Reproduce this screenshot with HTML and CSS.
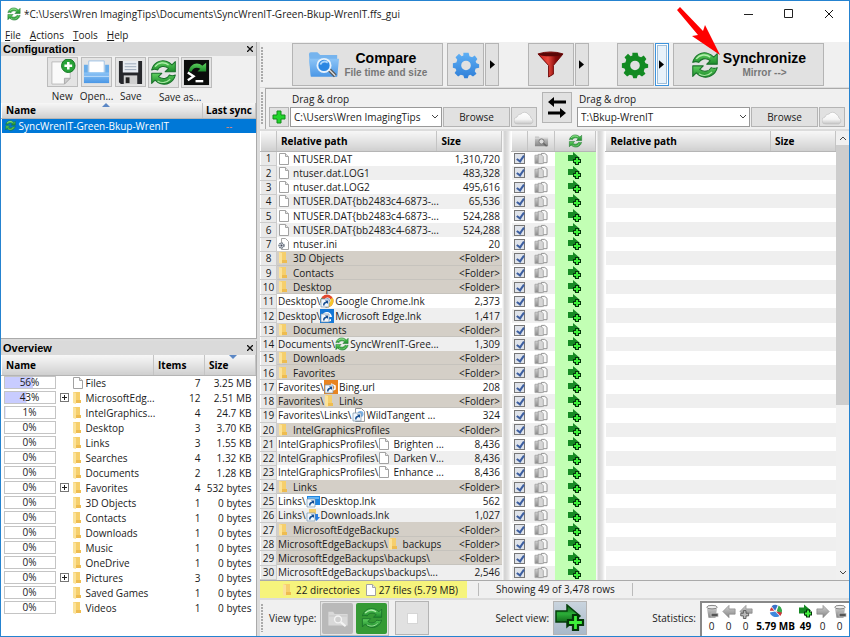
FILE: index.html
```html
<!DOCTYPE html>
<html lang="en">
<head>
<meta charset="utf-8">
<title>SyncWrenIT-Green-Bkup-WrenIT.ffs_gui</title>
<link rel="stylesheet" href="styles.css">
</head>
<body>
<svg class="defs" aria-hidden="true">
  <defs>
    <linearGradient id="gGreen" x1="0" y1="0" x2="0" y2="1"><stop offset="0" stop-color="#5fd05f"/><stop offset="1" stop-color="#1c8a2a"/></linearGradient>
    <linearGradient id="gArrow" x1="0" y1="0" x2="0" y2="1"><stop offset="0" stop-color="#0a5a14"/><stop offset=".4" stop-color="#2cae38"/><stop offset="1" stop-color="#03420a"/></linearGradient>
    <linearGradient id="gBlue" x1="0" y1="0" x2="0" y2="1"><stop offset="0" stop-color="#5fb0f5"/><stop offset="1" stop-color="#2f7fd8"/></linearGradient>
    <linearGradient id="gFolder" x1="0" y1="0" x2="0" y2="1"><stop offset="0" stop-color="#8cc4f6"/><stop offset="1" stop-color="#4a97e6"/></linearGradient>
    <linearGradient id="gRed" x1="0" y1="0" x2="1" y2="0"><stop offset="0" stop-color="#c81818"/><stop offset=".4" stop-color="#e8483c"/><stop offset=".7" stop-color="#8a0c0c"/><stop offset="1" stop-color="#5a0505"/></linearGradient>
    <linearGradient id="gGray" x1="0" y1="0" x2="0" y2="1"><stop offset="0" stop-color="#d2d2d2"/><stop offset="1" stop-color="#858585"/></linearGradient>
    <linearGradient id="gCloud" x1="0" y1="0" x2="0" y2="1"><stop offset="0" stop-color="#ffffff"/><stop offset=".6" stop-color="#f4f4f4"/><stop offset="1" stop-color="#c4c4c4"/></linearGradient>
  </defs>
  <symbol id="i-sync" viewBox="0 0 32 32">
    <g fill="url(#gGreen)" stroke="#19712a" stroke-width="1.2" stroke-linejoin="round">
      <path d="M2 13C4 5 12 0 20 3C23 4 25 6 26 7L30 3V15H18L22 11C17 7 11 9 9 13C7 12 4 12 2 13Z"/>
      <path d="M30 19C28 27 20 32 12 29C9 28 7 26 6 25L2 29V17H14L10 21C15 25 21 23 23 19C25 20 28 20 30 19Z"/>
    </g>
    <path d="M6 9C10 4 17 3 22 7" fill="none" stroke="#b5efb0" stroke-width="1.6"/>
    <path d="M9 26C14 29 20 28 24 24" fill="none" stroke="#a5e5a0" stroke-width="1.4"/>
  </symbol>
  <symbol id="i-file" viewBox="0 0 14 14"><path d="M1.500 1.500H7.500L10.500 4.500V12.500H1.500Z" fill="#fff" stroke="#a2a2a2"/><path d="M7.500 1.500V4.500H10.500" fill="#e6e6e6" stroke="#a5a5a5"/></symbol>
  <symbol id="i-ini" viewBox="0 0 14 14"><path d="M3.500 1.500H7.500L10.500 4.500V12.500H3.500Z" fill="#fff" stroke="#a5a5a5"/><circle cx="3.500" cy="8.500" r="2.500" fill="#d5dbe2" stroke="#66707c" stroke-width="1.400" stroke-dasharray="1.500 .8"/><circle cx="3.500" cy="8.500" r="1" fill="#445"/></symbol>
  <symbol id="i-folder" viewBox="0 0 14 14"><path d="M1 1H8V9L9 10V12H1Z" fill="#f6cf6c"/><path d="M1 1L4 2V13L1 12Z" fill="#fbe29a"/><path d="M4 9H9V12H4Z" fill="#eebc50"/></symbol>
  <symbol id="i-chrome" viewBox="0 0 14 14"><circle cx="7" cy="7" r="6.500" fill="#e2492f"/><path d="M7 7L12.600 3.800A6.500 6.500 0 0 1 7 13.500Z" fill="#f6c62e"/><path d="M7 7V13.500A6.500 6.500 0 0 1 1.400 3.800Z" fill="#42a351"/><circle cx="7.500" cy="6.500" r="2.600" fill="#4385e8" stroke="#fff"/><use href="#i-link"/></symbol>
  <symbol id="i-link" viewBox="0 0 14 14"><path d="M1 5H9V13H1Z" fill="#f4f8fc" stroke="#7792ad" stroke-width=".7"/><path d="M3 11.500C3 9 4 8 6 7.800L5 6.500H8V10L7 9C5.500 9 4.500 10 4.500 11.500Z" fill="#174f92"/></symbol>
  <symbol id="i-edge" viewBox="0 0 14 14"><path d="M0 0H14V14H0Z" fill="#1477d6"/><path d="M2 7C3 2 11 1 12 8H5.500C6 11 9 11 11 10V12C6 14 2 11 4 7C6 4 9 5 9 6.500" fill="#fff"/><use href="#i-link"/></symbol>
  <symbol id="i-bing" viewBox="0 0 14 14"><path d="M0 0H14V14H0Z" fill="#e88420"/><path d="M7 4L11 6V9L7 11" fill="none" stroke="#fff" stroke-width="1.500"/><use href="#i-link"/></symbol>
  <symbol id="i-url" viewBox="0 0 14 14"><path d="M3.500 .5H9.500L12.500 3.500V13.500H3.500Z" fill="#fff" stroke="#999"/><circle cx="8.500" cy="6" r="3" fill="#7bb1e6"/><use href="#i-link"/></symbol>
  <symbol id="i-desk" viewBox="0 0 14 14"><path d="M1 2H14V11H1Z" fill="#1f85e0"/><path d="M2 3H13V5H2Z" fill="#67b6f5"/><use href="#i-link"/></symbol>
  <symbol id="i-down" viewBox="0 0 14 14"><path d="M3 1H10V12H3Z" fill="#f6cf6c"/><path d="M9 6H12V9H14L10.500 13L8 9H9Z" fill="#2b7de0"/><use href="#i-link"/></symbol>
  <symbol id="i-copies" viewBox="0 0 16 14"><path d="M8.500 1.500H12L14.500 3.500V11.500H8.500Z" fill="#f6f6f6" stroke="#8b8b8b"/><path d="M1.500 3.500H6L8.500 5.500V12.500H1.500Z" fill="url(#gGray)" stroke="#aaa"/><path d="M5 2.500H8L10.500 5V12.500H5Z" fill="#d6d6d6" stroke="#999" stroke-width=".8"/></symbol>
  <symbol id="i-create" viewBox="0 0 30 28">
    <path d="M1 7H12V1L25 12L12 23V18H1Z" fill="url(#gArrow)" stroke="#063f0d" stroke-width="1.500"/>
    <path d="M18 11H23V16H28V21H23V26H18V21H13V16H18Z" fill="#3ef03a" stroke="#043508" stroke-width="2.200"/>
  </symbol>
  <symbol id="i-create-s" viewBox="0 0 14 14">
    <path d="M0 3H5V0L12 6L6 12V9H0Z" fill="#168a24"/>
    <path d="M7 5H11V7H13V11H11V13H7V11H5V7H7Z" fill="#04330a"/>
    <path d="M9 6V12M6 9H12" stroke="#3ef03a" stroke-width="2"/>
  </symbol>
  <symbol id="i-gear" viewBox="0 0 32 32">
    <path fill-rule="evenodd" d="M13 2H19L20 6L23 7L26 5L29 9L27 12L28 14L31 15V19L27 20L26 23L28 26L24 29L21 27L19 28L18 31H14L13 28L10 27L7 29L3 25L5 22L4 20L1 19V14L5 13L6 10L4 7L8 3L11 6L13 5ZM16 11A5 5 0 1 0 16 22A5 5 0 1 0 16 11Z"/>
  </symbol>
  <symbol id="i-cam" viewBox="0 0 32 28"><path d="M2 4H10L12 7H30V25H2Z" fill="url(#gGray)"/><path d="M2 9H30" stroke="#eee"/><circle cx="16" cy="15" r="5.500" fill="#ddd" stroke="#777" stroke-width="2"/><path d="M20 19L27 25" stroke="#666" stroke-width="3"/></symbol>
  <symbol id="i-camw" viewBox="0 0 32 28"><path d="M2 5H9L11 8H30V25H2Z" fill="#d9d9d9"/><path d="M3 11H29" stroke="#c2c2c2"/><circle cx="16" cy="16" r="5" fill="#cfcfcf" stroke="#f4f4f4" stroke-width="2"/><path d="M20 20L27 26" stroke="#f4f4f4" stroke-width="3"/></symbol>
  <symbol id="i-cloud" viewBox="0 0 20 15"><path d="M4 14A3.500 3.500 0 0 1 3 7A4 4 0 0 1 7 4A4.500 4.500 0 0 1 14.500 4.500A4 4 0 0 1 17 8A3.200 3.200 0 0 1 16.500 14Z" fill="url(#gCloud)" stroke="#c2c2c2" stroke-width=".7"/></symbol>
  <symbol id="i-chev" viewBox="0 0 8 6"><path d="M1 1L4 4L7 1" fill="none" stroke="#444"/></symbol>
  <symbol id="i-x" viewBox="0 0 10 10"><path d="M1 1L9 9M9 1L1 9" fill="none" stroke="#111"/></symbol>
  <symbol id="i-xb" viewBox="0 0 6 6"><path d="M0 0L6 6M6 0L0 6" fill="none" stroke="#111" stroke-width="1.300"/></symbol>
  <symbol id="i-play" viewBox="0 0 6 10"><path d="M0 0L6 5L0 10Z"/></symbol>
  <symbol id="i-bin" viewBox="0 0 16 16"><path d="M2 3L4 15H12L14 3Z" fill="url(#gGray)"/><ellipse cx="8" cy="3" rx="6" ry="2" fill="#eee" stroke="#777"/><path d="M7 10H15V14H7Z" fill="#555" stroke="#ddd" stroke-width=".7"/></symbol>
  <symbol id="i-garrow" viewBox="0 0 16 16"><path d="M1 5H8V1L15 8L8 15V11H1Z" fill="url(#gGray)" stroke="#888" stroke-width=".8"/></symbol>
</svg>

<div class="window">
  <header class="titlebar">
    <svg class="app-icon"><use href="#i-sync"/></svg>
    <span class="title">*C:\Users\Wren ImagingTips\Documents\SyncWrenIT-Green-Bkup-WrenIT.ffs_gui</span>
    <div class="winbtns">
      <button type="button" aria-label="Minimize"><svg viewBox="0 0 10 10"><path d="M0 5.500H9" stroke="#222"/></svg></button>
      <button type="button" aria-label="Maximize"><svg viewBox="0 0 10 10"><path d="M.5 .5H8.500V8.500H.5Z" fill="none" stroke="#222"/></svg></button>
      <button type="button" aria-label="Close"><svg><use href="#i-x"/></svg></button>
    </div>
  </header>
  <nav class="menubar"><a href="#"><u>F</u>ile</a><a href="#"><u>A</u>ctions</a><a href="#"><u>T</u>ools</a><a href="#"><u>H</u>elp</a></nav>

  <div class="body">
    <aside class="side">
      <section class="panel config">
        <h2 class="caption">Configuration<button type="button" aria-label="Close configuration"><svg><use href="#i-xb"/></svg></button></h2>
        <div class="tools">
          <div class="tool"><button type="button" id="bNew"><svg viewBox="0 0 28 28"><path d="M3 3H22V20L16 26H3Z" fill="#fafafa" stroke="#bbb"/><path d="M22 20L16 26V20Z" fill="#ccc" stroke="#aaa"/><circle cx="20" cy="7" r="7" fill="#28a338" stroke="#10751f"/><path d="M20 3V11M16 7H24" stroke="#fff" stroke-width="2.600"/></svg></button><label for="bNew">New</label></div>
          <div class="tool"><button type="button" id="bOpen"><svg viewBox="0 0 28 28"><path d="M6 2H22V16H6Z" fill="#fff" stroke="#9dc2e6"/><path d="M1 6H5V14H23V6H27V25H1Z" fill="#69adea"/><path d="M1 14H27V25H1Z" fill="url(#gFolder)"/><path d="M1 18H27" stroke="#c3e0fa"/></svg></button><label for="bOpen">Open...</label></div>
          <div class="tool"><button type="button" id="bSave"><svg viewBox="0 0 28 28"><path d="M2 2H26V26H4L2 24Z" fill="#26272b"/><path d="M6 2H22V14H6Z" fill="#e9edf2"/><path d="M8 5H20M8 8H20M8 11H20" stroke="#9aa8b8"/><path d="M7 17H21V26H7Z" fill="#cfcfcf"/><path d="M9 19H13V25H9Z" fill="#222"/></svg></button><label for="bSave">Save</label></div>
          <div class="tool pair"><div class="pair-btns"><button type="button" id="bSaveAs"><svg><use href="#i-sync"/></svg></button><button type="button" aria-label="Save as batch job"><svg viewBox="0 0 28 28"><path d="M1 1H27V27H1Z" fill="#0b0d0c"/><path d="M6 13C7 5 15 2 20 7L24 4V13H15L18 10C14 8 10 9 9 13Z" fill="url(#gGreen)"/><path d="M5 14L11 18L5 22" fill="none" stroke="#fff" stroke-width="2.400"/><path d="M13 23H21" stroke="#fff" stroke-width="2.400"/></svg></button></div><label for="bSaveAs">Save as...</label></div>
        </div>
        <table class="cfg">
          <thead><tr><th>Name<svg class="sort up" viewBox="0 0 8 4"><path d="M0 4L4 0L8 4Z"/></svg></th><th class="last">Last sync</th></tr></thead>
          <tbody><tr><td><span class="cell"><svg class="mini"><use href="#i-sync"/></svg>SyncWrenIT-Green-Bkup-WrenIT</span></td><td class="dash">--</td></tr></tbody>
        </table>
      </section>
      <section class="panel overview">
        <h2 class="caption">Overview<button type="button" aria-label="Close overview"><svg><use href="#i-xb"/></svg></button></h2>
        <table class="ov">
          <colgroup><col><col class="c-items"><col class="c-size"></colgroup>
          <thead><tr><th>Name</th><th>Items</th><th>Size<svg class="sort" viewBox="0 0 8 4"><path d="M0 0L4 4L8 0Z"/></svg></th></tr></thead>
          <tbody id="ovRows"></tbody>
        </table>
      </section>
    </aside>

    <main class="main">
      <div class="bar top">
        <i class="grip"></i>
        <div class="group">
          <button type="button" class="btn big"><svg class="pic" viewBox="0 0 34 30"><path d="M1 4Q1 2 3 2H10L13 5H31V27H3Z" fill="#76b4ee"/><path d="M1 9H33L31 28H3Z" fill="url(#gFolder)"/><path d="M22 20L29 27" stroke="#555" stroke-width="4"/><path d="M22 20L29 27" stroke="#ddd" stroke-width="1.500"/><circle cx="17" cy="16" r="7" fill="#2a86e2" stroke="#e7f2fc" stroke-width="2"/><path d="M13 15Q16 10 21 13" stroke="#a9d4fa" stroke-width="2" fill="none"/></svg><span class="lbl"><b>Compare</b><small>File time and size</small></span></button>
          <button type="button" class="btn sq" aria-label="Comparison settings"><svg class="gear blue"><use href="#i-gear"/></svg></button>
          <button type="button" class="btn drop" aria-label="Comparison options"><svg><use href="#i-play"/></svg></button>
        </div>
        <div class="group">
          <button type="button" class="btn filter" aria-label="Filter"><svg viewBox="0 0 28 28"><path d="M1 3Q14 -1 27 3L17 15V24L12 27V15Z" fill="url(#gRed)" stroke="#6d0909"/><ellipse cx="14" cy="3.500" rx="12" ry="2" fill="#5a0707"/></svg></button>
          <button type="button" class="btn drop" aria-label="Filter options"><svg><use href="#i-play"/></svg></button>
        </div>
        <div class="group">
          <button type="button" class="btn sq" aria-label="Synchronization settings"><svg class="gear green"><use href="#i-gear"/></svg></button>
          <button type="button" class="btn drop focus" aria-label="Synchronization options"><svg><use href="#i-play"/></svg></button>
          <button type="button" class="btn big sync"><svg class="pic sy"><use href="#i-sync"/></svg><span class="lbl"><b>Synchronize</b><small>Mirror --&gt;</small></span>
            <svg class="pointer" viewBox="0 0 46 52"><path d="M1 4L4 1L27 25L29 19L44 49L16 30L22 29Z" fill="#fe0000"/></svg></button>
        </div>
      </div>

      <div class="bar folders">
        <i class="grip"></i>
        <div class="pairbox">
          <div class="fold left">
            <label for="leftPath">Drag &amp; drop</label>
            <div class="line">
              <button type="button" class="btn plus" aria-label="Add folder pair"><svg viewBox="0 0 14 14"><path d="M5 1H9V5H13V9H9V13H5V9H1V5H5Z" fill="#22d52c" stroke="#128b1a"/></svg></button>
              <span class="combo"><select id="leftPath"><option>C:\Users\Wren ImagingTips</option></select><svg><use href="#i-chev"/></svg></span>
              <button type="button" class="btn browse">Browse</button>
              <button type="button" class="btn cloud" aria-label="Left cloud folder"><svg><use href="#i-cloud"/></svg></button>
            </div>
          </div>
          <button type="button" class="btn swap" aria-label="Swap sides"><svg viewBox="0 0 22 22"><path d="M7 5H20M2 16H15" stroke="#000" stroke-width="3"/><path d="M2 5L8 0V10ZM20 16L14 11V21Z"/></svg></button>
          <div class="fold right">
            <label for="rightPath">Drag &amp; drop</label>
            <div class="line">
              <span class="combo"><select id="rightPath"><option>T:\Bkup-WrenIT</option></select><svg><use href="#i-chev"/></svg></span>
              <button type="button" class="btn browse">Browse</button>
              <button type="button" class="btn cloud" aria-label="Right cloud folder"><svg><use href="#i-cloud"/></svg></button>
            </div>
          </div>
        </div>
      </div>

      <div class="grids">
        <table class="grid gl"><colgroup><col class="c-num"><col><col class="c-sz"></colgroup><thead><tr><th></th><th>Relative path</th><th>Size</th></tr></thead><tbody id="leftRows"></tbody></table>
        <i class="split"></i>
        <table class="grid gm"><colgroup><col class="c-num"><col><col class="c-act"></colgroup><thead><tr><th></th><th><svg class="hcam"><use href="#i-cam"/></svg></th><th><svg class="hsync"><use href="#i-sync"/></svg></th></tr></thead><tbody id="midRows"></tbody></table>
        <i class="split"></i>
        <table class="grid gr"><colgroup><col><col class="c-sz"></colgroup><thead><tr><th>Relative path</th><th>Size</th></tr></thead><tbody id="rightRows"></tbody></table>
        <div class="scroll"><svg class="flip"><use href="#i-chev"/></svg><i></i><svg><use href="#i-chev"/></svg></div>
      </div>

      <div class="status">
        <div class="mark"><svg><use href="#i-folder"/></svg><span>22 directories</span><svg><use href="#i-file"/></svg><span>27 files (5.79 MB)</span></div>
        <div class="showing">Showing 49 of 3,478 rows</div>
      </div>

      <footer class="bar bottom">
        <i class="grip"></i>
        <span>View type:</span>
        <div class="toggles"><button type="button" class="off" aria-label="Category view"><svg><use href="#i-camw"/></svg></button><button type="button" class="on" aria-label="Action view"><svg><use href="#i-sync"/></svg></button></div>
        <button type="button" class="btn blank" aria-label="Excluded items"><i></i></button>
        <span class="sel">Select view:</span>
        <button type="button" class="btn create" aria-label="Show items to create"><svg><use href="#i-create"/></svg></button>
        <span class="stlabel">Statistics:</span>
        <div class="stats">
          <div><svg><use href="#i-bin"/></svg>0</div>
          <div><svg class="mir"><use href="#i-garrow"/></svg>0</div>
          <div><svg viewBox="0 0 16 16"><path d="M15 5H8V1L1 8L8 14V10H15Z" fill="url(#gGray)" stroke="#888" stroke-width=".8"/><path d="M5 7H8V10H11V13H8V16H5V13H2V10H5Z" fill="#bbb" stroke="#555"/></svg>0</div>
          <div class="wide"><svg viewBox="0 0 16 16"><path d="M7 7L3 2A7 7 0 0 1 10 1Z" fill="#3a72c8"/><path d="M9 7L11 1A7 7 0 0 1 13 12Z" fill="#35a84a"/><path d="M7 8L12 13A7 7 0 0 1 1 9Z" fill="#3f87dc"/><path d="M6 7L1 7A7 7 0 0 1 3 3Z" fill="#d0343a"/><path d="M8 8L13 13L15 9Z" fill="#d0343a"/></svg>5.79 MB</div>
          <div class="bold"><svg><use href="#i-create-s"/></svg>49</div>
          <div><svg><use href="#i-garrow"/></svg>0</div>
          <div><svg><use href="#i-bin"/></svg>0</div>
        </div>
      </footer>
    </main>
  </div>
</div>
<script src="app.js"></script>
</body>
</html>
```
FILE: styles.css
```css
* { box-sizing: border-box; }
html, body { margin: 0; }
body { font: 10px/14px "Open Sans", "Noto Sans", sans-serif; color: #1a1a1a; background: #f0f0f0; }
button { font: inherit; color: inherit; padding: 0; border: 0; background: none; display: flex; align-items: center; justify-content: center; }
svg { display: block; flex: none; }
.defs { position: absolute; width: 0; height: 0; }
table { border-collapse: collapse; table-layout: fixed; width: 100%; }
th, td { padding: 0; text-align: left; white-space: nowrap; overflow: hidden; }
th { position: relative; font-weight: 700; color: #000; background: linear-gradient(#f7f7f7, #e4e4e4 50%, #cfcfcf); border-left: 1px solid #fff; border-right: 1px solid #c4c4c4; border-bottom: 1px solid #b5b5b5; padding-left: 4px; }

.window { min-height: 100vh; display: flex; flex-direction: column; background: #fff; border: 1px solid #2583d0; }
.titlebar { display: flex; align-items: center; height: 26px; padding-left: 6px; }
.app-icon { width: 14px; height: 14px; margin-right: 3px; }
.title { flex: 1; white-space: nowrap; overflow: hidden; }
.winbtns { display: flex; }
.winbtns button { width: 40px; height: 26px; }
.winbtns svg { width: 10px; height: 10px; }
.menubar { display: flex; gap: 9px; padding-left: 4px; height: 15px; align-items: center; }
.menubar a { color: inherit; text-decoration: none; }

.body { flex: 1; display: flex; background: #dcdcdc; }
.side { flex: 0 0 256px; display: flex; flex-direction: column; gap: 2px; margin-right: 3px; }
.panel { background: #fff; display: flex; flex-direction: column; border-right: 1px solid #aaa; }
.config { flex: 0 0 auto; height: 50%; border-bottom: 1px solid #aaa; }
.overview { flex: 1; }
.caption { margin: 0; height: 14px; background: #dadada; font: bold 11px/14px "Liberation Sans", Arial, sans-serif; color: #000; padding: 0 2px; display: flex; justify-content: space-between; }
.caption svg { width: 6px; height: 6px; }
.caption button { width: 8px; }
.tools { display: flex; justify-content: center; gap: 2px; background: #f0f0f0; height: 47px; padding: 1px 0 0 2px; }
.tool { display: flex; flex-direction: column; align-items: center; gap: 2px; }
.tool label { line-height: 14px; }
.tool button { width: 31px; height: 31px; background: #e4e4e4; border: 1px solid #bcbcbc; }
.tool button svg { width: 27px; height: 27px; }
.pair-btns { display: flex; gap: 2px; }
.cfg th { height: 15px; }
.cfg .last { width: 53px; padding-left: 3px; }
.cfg td { height: 14px; background: #0078d7; color: #fff; }
.cfg .dash { text-align: center; color: #e58a70; }
.cell { display: flex; align-items: center; }
.mini { width: 11px; height: 11px; margin: 0 3px; }
.sort { position: absolute; width: 8px; height: 4px; top: 0; left: 50%; fill: #5b87c5; }
.ov .sort { left: 24px; }
.ov th { height: 20px; }
.ov td { height: 15px; text-align: right; padding-right: 4px; }
.ov td:first-child { text-align: left; padding: 0 0 0 2px; overflow: visible; }
.c-items { width: 51px; }
.c-size { width: 51px; }
.pct { flex: none; width: 52px; height: 13px; line-height: 11px; border: 1px solid #c4c4c4; text-align: center; background: linear-gradient(#c8ccff, #c8ccff) no-repeat 0 0; margin-right: 4px; }
.tog { flex: none; width: 9px; height: 9px; border: 1px solid #777; background: linear-gradient(#222, #222) center / 5px 1px no-repeat, linear-gradient(#222, #222) center / 1px 5px no-repeat; margin-right: 3px; }
.tog.none { visibility: hidden; }
.ic { width: 14px; height: 14px; }

.main { flex: 1; min-width: 0; display: flex; flex-direction: column; }
.bar { display: flex; background: #f0f0f0; }
.grip { flex: none; width: 3px; margin: 4px 1px; background: radial-gradient(circle at 1px 1px, #aaa 1px, transparent 1px) 0 0 / 3px 3px; }
.btn { background: #e1e1e1; border: 1px solid #b4b4b4; }
.top { height: 45px; padding: 1px 25px 1px 0; justify-content: space-between; }
.top .grip { margin-right: 0; }
.group { display: flex; gap: 1px; }
.group .btn { height: 43px; }
.big { width: 151px; gap: 4px; position: relative; margin-right: 3px; }
.big.sync { margin: 0 0 0 3px; }
.pic { width: 32px; height: 29px; }
.sy { width: 28px; height: 28px; }
.lbl { display: flex; flex-direction: column; align-items: center; font-family: "Liberation Sans", Arial, sans-serif; }
.lbl b { font-size: 14px; line-height: 16px; color: #000; }
.lbl small { font-size: 10px; line-height: 13px; font-weight: 700; color: #777; }
.sq { width: 37px; }
.gear { width: 28px; height: 28px; }
.blue { fill: url(#gBlue); }
.green { fill: #128a22; }
.drop { width: 14px; }
.drop svg { width: 5px; height: 9px; }
.filter { width: 46px; }
.filter svg { width: 27px; height: 27px; }
.focus { background: #e8f2fa; border: 1px solid #3d93dc; box-shadow: inset 0 0 0 1px #fff, inset 0 0 0 2px #9dbdd8; }
.pointer { position: absolute; width: 46px; height: 52px; right: 101px; top: -38px; z-index: 2; }

.folders { margin-top: 1px; height: 41px; }
.pairbox { flex: 1; display: flex; border-left: 1px solid #aaa; border-top: 1px solid #aaa; padding: 3px 4px 0 3px; gap: 5px; }
.fold { display: flex; flex-direction: column; min-width: 0; gap: 1px; }
.fold.left { flex: 268; }
.fold.right { flex: 268; }
.fold label { padding-left: 2px; line-height: 14px; height: 14px; }
.left label { padding-left: 23px; }
.line { display: flex; gap: 1px; height: 20px; }
.plus { width: 20px; }
.plus svg { width: 14px; height: 14px; }
.combo { position: relative; flex: 1; min-width: 0; display: flex; }
.combo select { appearance: none; flex: 1; min-width: 0; font: inherit; color: inherit; padding: 0 3px; border: 1px solid #999; border-radius: 0; background: #fff; }
.combo svg { position: absolute; right: 3px; top: 7px; width: 8px; height: 6px; pointer-events: none; }
.browse { width: 67px; }
.cloud { width: 26px; }
.cloud svg { width: 20px; height: 15px; }
.swap { width: 30px; height: 31px; }
.swap svg { width: 22px; height: 22px; }

.grids { flex: 1; display: flex; margin-top: 2px; background: #fff; border-bottom: 1px solid #aaa; }
.grid { height: auto; }
.grid th { height: 20px; }
.grid td { height: 14px; line-height: 14px; }
.gl { flex: 243; width: 0; }
.gm { flex: 0 0 85px; width: 85px; }
.gr { flex: 231; width: 0; }
.c-num { width: 16px; }
.c-sz { width: 65px; }
.c-act { width: 41px; }
.grid tbody tr:nth-child(even) { background: #efefef; }
.grid td.num { text-align: center; background: #e9e9e9; border: 1px solid #ccc; border-left-color: #fff; line-height: 12px; height: 13px; overflow: visible; }
.gl tr.dir td:not(.num) { background: #d4cfc7; box-shadow: inset 0 -1px #c6c3bd; }
.grid td.size { text-align: right; padding-right: 2px; }
.grid td.path { padding-left: 1px; overflow: visible; }
.path .cell { height: 14px; }
.path .ic { margin: 0 1px; }
.path .ic:first-child { margin: 0 1px 0 0; }
.split { flex: none; width: 9px; background: linear-gradient(90deg, #fff, #d2d2d2 30%, #e4e4e4 70%, #fff); }
.gm td:nth-child(1) { padding-left: 2px; }
.gm td svg { margin: auto; width: 16px; height: 13px; }
.gm th { padding: 0; }
.gm th svg { margin: auto; width: 15px; height: 14px; }
.gm td.act { background: #c2ffb4; }
.gm td.act svg { width: 14px; height: 14px; }
.gm input { appearance: none; display: block; position: relative; margin: 0; width: 11px; height: 11px; border: 1px solid #777; background: #dfe3ea; }
.gm input::before { content: ""; position: absolute; left: 3px; top: 0; width: 3px; height: 6px; border: solid #3c5ea0; border-width: 0 2px 2px 0; transform: rotate(35deg); }
.scroll { flex: none; width: 13px; background: #f0f0f0; display: flex; flex-direction: column; align-items: center; }
.scroll svg { width: 8px; height: 6px; margin: 4px 0; }
.scroll .flip { transform: scaleY(-1); }
.scroll i { width: 13px; height: 58%; background: #cdcdcd; margin-bottom: auto; }

.status { display: flex; height: 17px; align-items: stretch; background: #f0f0f0; }
.mark { width: 207px; background: #f6f47c; display: flex; align-items: center; padding-left: 22px; }
.mark svg { width: 14px; height: 14px; }
.mark span { margin-right: 5px; }
.showing { margin: 2px 0 2px 11px; padding: 0 17px; border: solid #bbb; border-width: 0 1px; line-height: 13px; }
.bottom { margin-top: 2px; height: 36px; align-items: center; gap: 4px; }
.bottom .grip { align-self: stretch; }
.toggles { display: flex; gap: 3px; border: 1px solid #bbb; padding: 1px; background: #e4e4e4; }
.toggles button { width: 31px; height: 31px; border-radius: 2px; }
.off { background: #b9b9b9; }
.on { background: #359a35; }
.toggles svg { width: 22px; height: 22px; }
.blank { width: 34px; height: 34px; margin-left: 2px; }
.blank i { width: 11px; height: 11px; background: #fff; border: 1px solid #d6d6d6; }
.sel { margin-left: 62px; }
.create { width: 34px; height: 34px; background: linear-gradient(#c9d4de, #a9b9c9); }
.create svg { width: 30px; height: 28px; }
.stlabel { margin-left: auto; }
.stats { display: flex; background: #fff; border: 1px solid #888; border-width: 2px 0 0 2px; height: 35px; padding: 1px 1px 0; }
.stats div { width: 17px; display: flex; flex-direction: column; align-items: center; white-space: nowrap; }
.stats svg { width: 14px; height: 15px; }
.stats .wide { width: 43px; font-weight: 700; color: #000; }
.stats .bold { font-weight: 700; color: #000; }
.mir { transform: scaleX(-1); }
```
FILE: app.js
```js
const use = (id, cls = "ic") => `<svg class="${cls}"><use href="#i-${id}"/></svg>`;

// percent, expandable, name, items, size
const overview = [
  [56, 0, "Files", 7, "3.25 MB"], [43, 1, "MicrosoftEdg...", 12, "2.51 MB"],
  [1, 0, "IntelGraphics...", 4, "24.7 KB"], [0, 0, "Desktop", 3, "3.70 KB"],
  [0, 0, "Links", 3, "1.55 KB"], [0, 0, "Searches", 4, "1.32 KB"],
  [0, 0, "Documents", 2, "1.28 KB"], [0, 1, "Favorites", 4, "532 bytes"],
  [0, 0, "3D Objects", 1, "0 bytes"], [0, 0, "Contacts", 1, "0 bytes"],
  [0, 0, "Downloads", 1, "0 bytes"], [0, 0, "Music", 1, "0 bytes"],
  [0, 0, "OneDrive", 1, "0 bytes"], [0, 1, "Pictures", 3, "0 bytes"],
  [0, 0, "Saved Games", 1, "0 bytes"], [0, 0, "Videos", 1, "0 bytes"]
];

// parent path, icon, name, size (empty for a folder)
const rows = [
  ["", "file", "NTUSER.DAT", "1,310,720"], ["", "file", "ntuser.dat.LOG1", "483,328"],
  ["", "file", "ntuser.dat.LOG2", "495,616"], ["", "file", "NTUSER.DAT{bb2483c4-6873-...", "65,536"],
  ["", "file", "NTUSER.DAT{bb2483c4-6873-...", "524,288"], ["", "file", "NTUSER.DAT{bb2483c4-6873-...", "524,288"],
  ["", "ini", "ntuser.ini", "20"], ["", "folder", "3D Objects", ""],
  ["", "folder", "Contacts", ""], ["", "folder", "Desktop", ""],
  ["Desktop\\", "chrome", "Google Chrome.lnk", "2,373"], ["Desktop\\", "edge", "Microsoft Edge.lnk", "1,417"],
  ["", "folder", "Documents", ""], ["Documents\\", "sync", "SyncWrenIT-Gree...", "1,309"],
  ["", "folder", "Downloads", ""], ["", "folder", "Favorites", ""],
  ["Favorites\\", "bing", "Bing.url", "208"], ["Favorites\\", "folder", "Links", ""],
  ["Favorites\\Links\\", "url", "WildTangent ...", "324"], ["", "folder", "IntelGraphicsProfiles", ""],
  ["IntelGraphicsProfiles\\", "file", "Brighten ...", "8,436"], ["IntelGraphicsProfiles\\", "file", "Darken V...", "8,436"],
  ["IntelGraphicsProfiles\\", "file", "Enhance ...", "8,436"], ["", "folder", "Links", ""],
  ["Links\\", "desk", "Desktop.lnk", "562"], ["Links\\", "down", "Downloads.lnk", "1,027"],
  ["", "folder", "MicrosoftEdgeBackups", ""], ["MicrosoftEdgeBackups\\", "folder", "backups", ""],
  ["MicrosoftEdgeBackups\\backups\\", "", "", ""], ["MicrosoftEdgeBackups\\backups\\...", "", "", "2,546"]
];

document.getElementById("ovRows").innerHTML = overview.map(([p, ex, name, n, size], i) =>
  `<tr><td><span class="cell"><span class="pct" style="background-size:${p}% 100%">${p}%</span><span class="tog${ex ? "" : " none"}"></span>${use(i ? "folder" : "file")}${name}</span></td><td>${n}</td><td>${size}</td></tr>`).join("");

document.getElementById("leftRows").innerHTML = rows.map(([dir, icon, name, size], i) =>
  `<tr class="${size ? "" : "dir"}"><td class="num">${i + 1}</td><td class="path"><span class="cell">${dir}${icon ? (dir ? `<span>${use(icon)}</span>` : use(icon)) : ""}${name}</span></td><td class="size">${size || "&lt;Folder&gt;"}</td></tr>`).join("");

document.getElementById("midRows").innerHTML = rows.map((_, i) =>
  `<tr><td><input type="checkbox" checked aria-label="Include row ${i + 1}"></td><td>${use("copies")}</td><td class="act">${use("create-s")}</td></tr>`).join("");

document.getElementById("rightRows").innerHTML = rows.map(() => "<tr><td></td><td></td></tr>").join("");
```
